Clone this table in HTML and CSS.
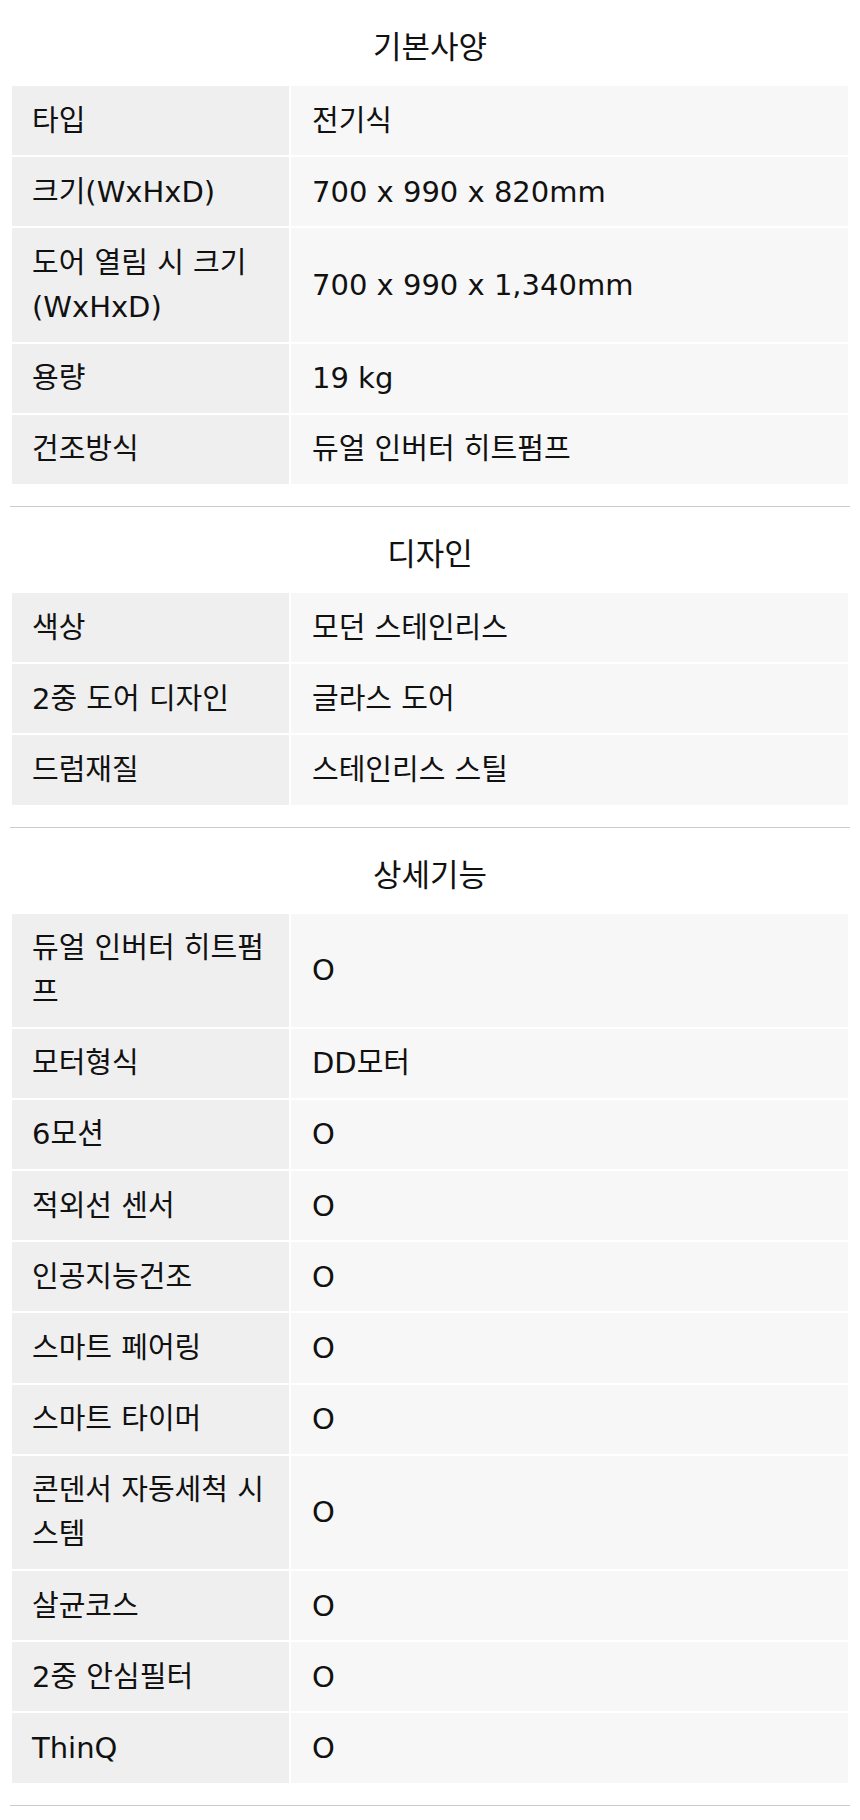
FILE: index.html
```html
<!DOCTYPE html>
<html lang="ko">
<head>
<meta charset="utf-8">
<title>제품 사양</title>
<link rel="stylesheet" href="styles.css">
</head>
<body>
<div class="spec">
  <section class="group">
    <h2 class="group-title">기본사양</h2>
    <table class="spec-table">
      <tr><th>타입</th><td>전기식</td></tr>
      <tr><th>크기(WxHxD)</th><td>700 x 990 x 820mm</td></tr>
      <tr><th>도어 열림 시 크기(WxHxD)</th><td>700 x 990 x 1,340mm</td></tr>
      <tr><th>용량</th><td>19 kg</td></tr>
      <tr><th>건조방식</th><td>듀얼 인버터 히트펌프</td></tr>
    </table>
  </section>
  <section class="group">
    <h2 class="group-title">디자인</h2>
    <table class="spec-table">
      <tr><th>색상</th><td>모던 스테인리스</td></tr>
      <tr><th>2중 도어 디자인</th><td>글라스 도어</td></tr>
      <tr><th>드럼재질</th><td>스테인리스 스틸</td></tr>
    </table>
  </section>
  <section class="group">
    <h2 class="group-title">상세기능</h2>
    <table class="spec-table">
      <tr><th>듀얼 인버터 히트펌프</th><td>O</td></tr>
      <tr><th>모터형식</th><td>DD모터</td></tr>
      <tr><th>6모션</th><td>O</td></tr>
      <tr><th>적외선 센서</th><td>O</td></tr>
      <tr><th>인공지능건조</th><td>O</td></tr>
      <tr><th>스마트 페어링</th><td>O</td></tr>
      <tr><th>스마트 타이머</th><td>O</td></tr>
      <tr><th>콘덴서 자동세척 시스템</th><td>O</td></tr>
      <tr><th>살균코스</th><td>O</td></tr>
      <tr><th>2중 안심필터</th><td>O</td></tr>
      <tr><th>ThinQ</th><td>O</td></tr>
    </table>
  </section>
</div>
</body>
</html>
```

FILE: styles.css
```css
html, body {
  margin: 0;
  padding: 0;
  background: #ffffff;
}

body {
  font-family: "DejaVu Sans", "Noto Sans CJK KR", sans-serif;
  font-size: 29px;
  color: #111111;
  font-feature-settings: "palt";
}

.spec {
  padding: 0 10px;
}

.group {
  border-bottom: 1px solid #cccccc;
  padding-bottom: 20px;
}

.group-title {
  margin: 0;
  padding: 25px 0 15px;
  font-size: 31px;
  font-weight: normal;
  line-height: 44px;
  text-align: center;
}

.spec-table {
  width: 100%;
  border-collapse: separate;
  border-spacing: 2px;
  table-layout: fixed;
}

.spec-table th,
.spec-table td {
  padding: 12.6px 20px;
  line-height: 44px;
  font-weight: normal;
  text-align: left;
  vertical-align: middle;
}

.spec-table th {
  width: 237px;
  background: #efefef;
}

.spec-table td {
  background: #f7f7f7;
  padding-left: 21px;
}
```
